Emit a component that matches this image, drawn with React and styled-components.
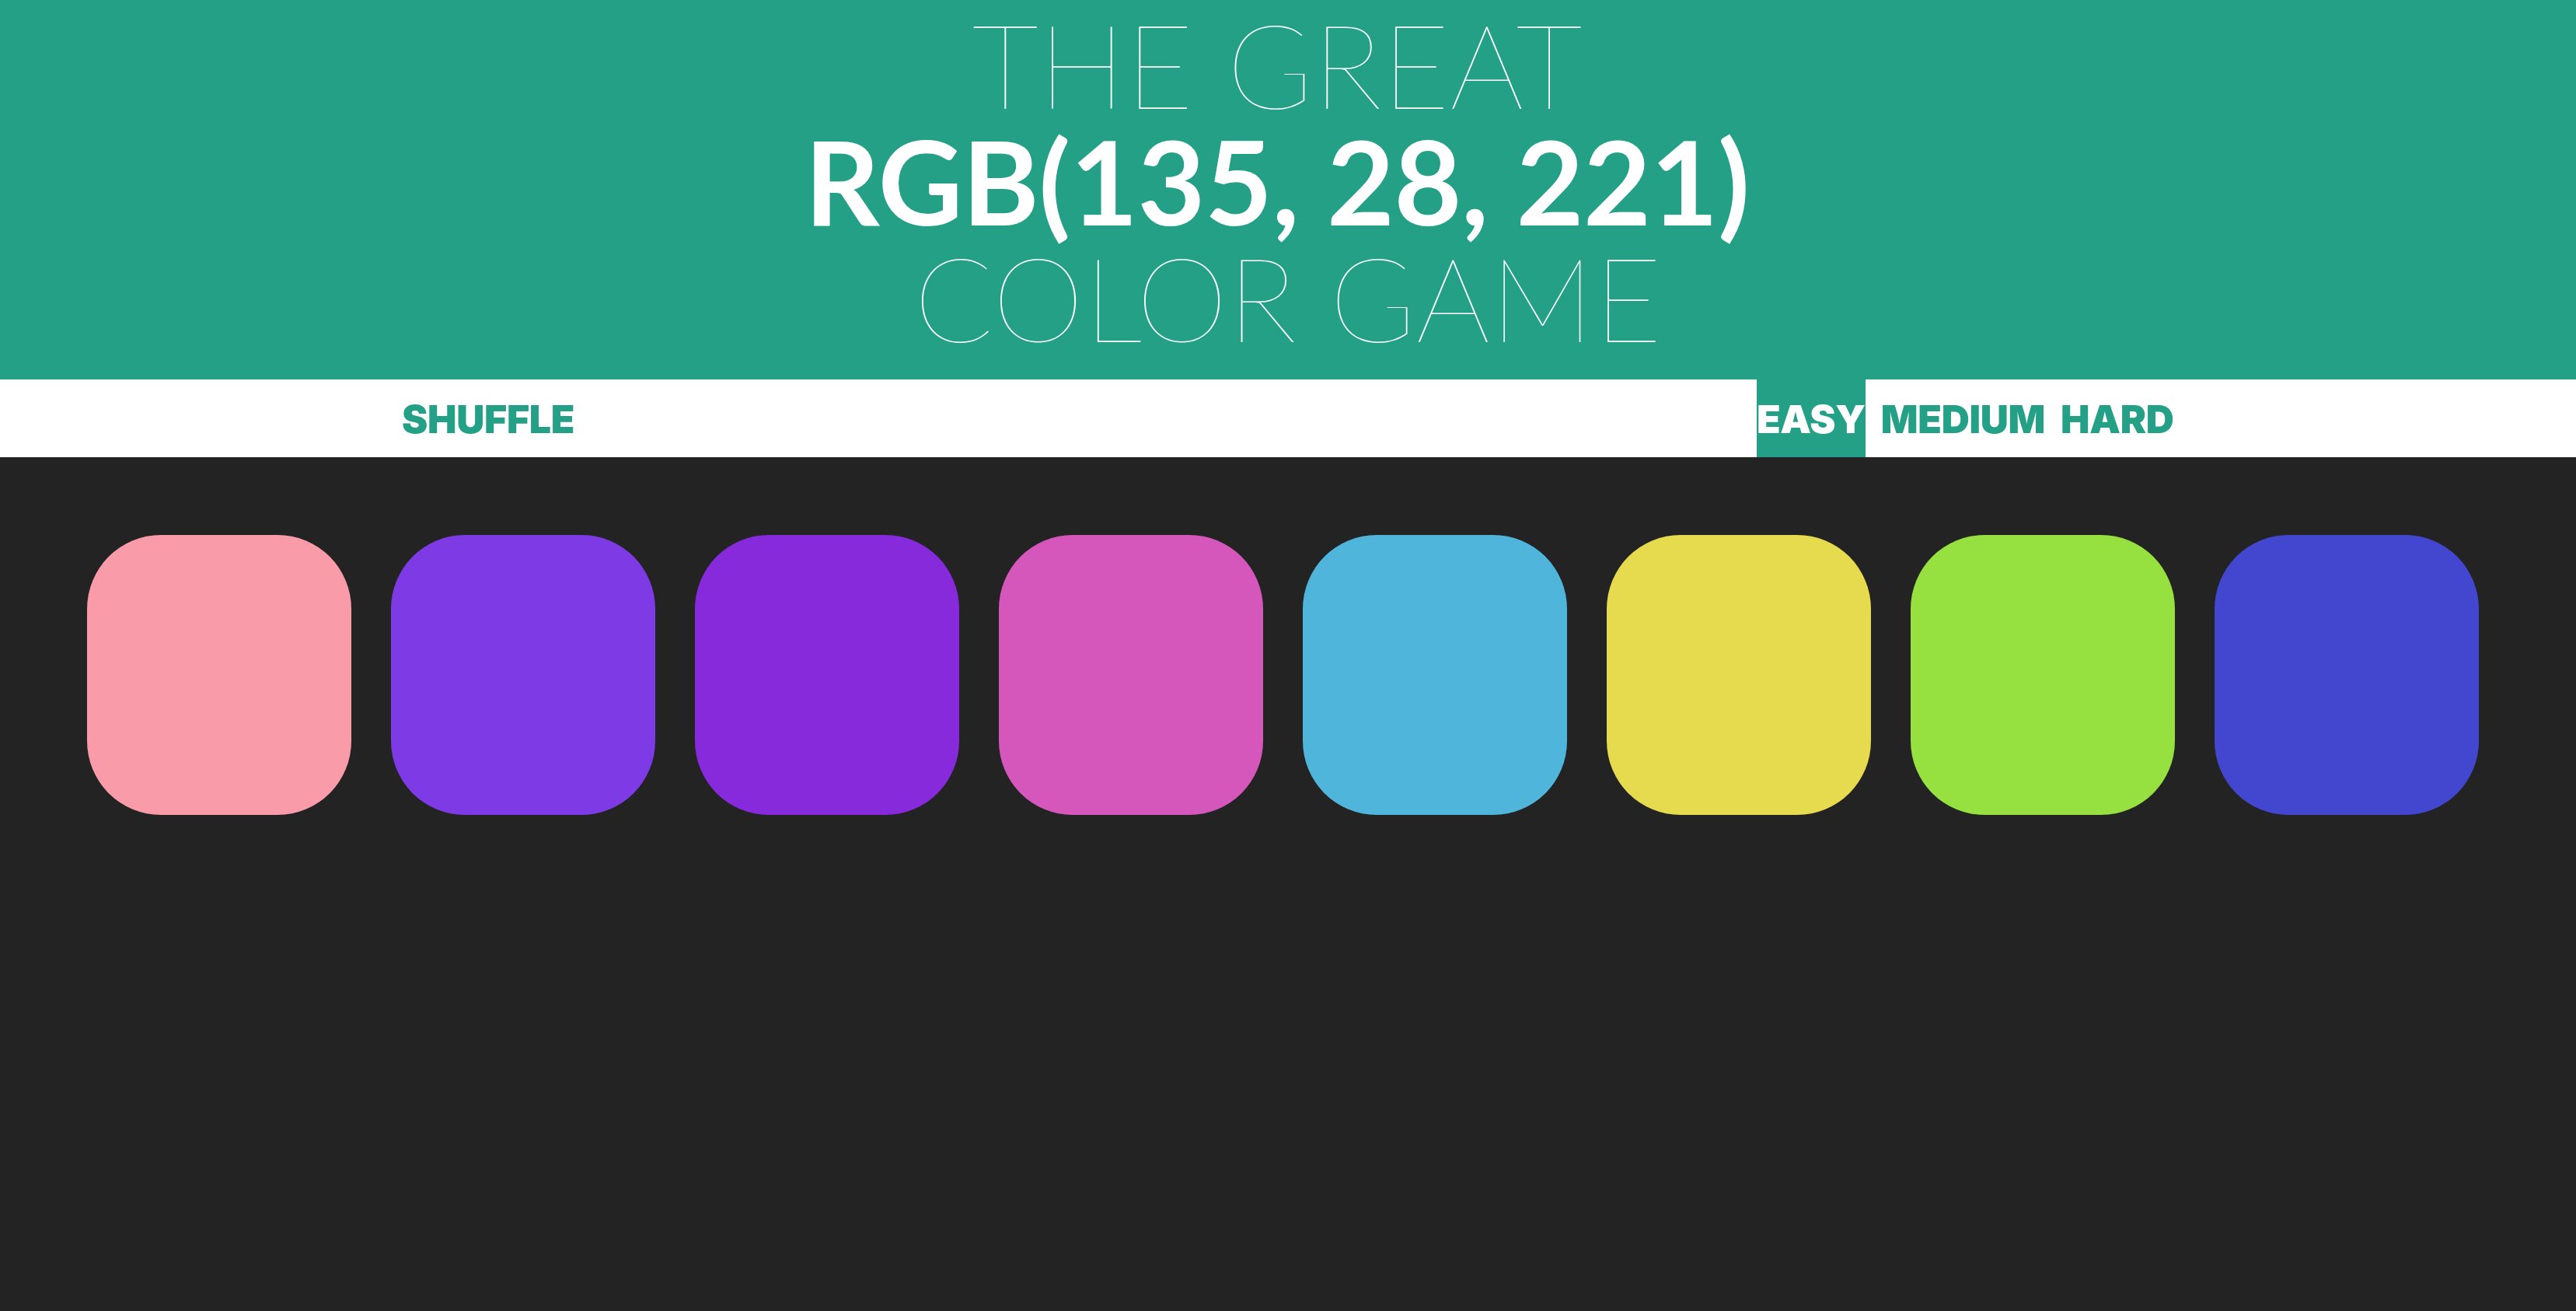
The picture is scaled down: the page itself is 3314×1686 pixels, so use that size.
import styled, { createGlobalStyle } from 'styled-components';

const GlobalStyle = createGlobalStyle`
  body {
    margin: 0;
    background: #232323;
    font-family: Lato, "Open Sans", sans-serif;
  }
`;

const colors = [
  'rgb(250, 155, 170)',
  'rgb(126, 59, 229)',
  'rgb(135, 42, 220)',
  'rgb(213, 87, 188)',
  'rgb(80, 181, 219)',
  'rgb(230, 219, 78)',
  'rgb(150, 224, 64)',
  'rgb(67, 71, 208)',
];

const App = () => (
  <Page>
    <GlobalStyle />
    <Header>
      <Line $trail>The Great</Line>
      <ColorDisplay>RGB(135, 28, 221)</ColorDisplay>
      <Line>Color Game</Line>
    </Header>
    <Stripe>
      <ShuffleButton>Shuffle</ShuffleButton>
      <Modes>
        <ModeButton $selected>Easy</ModeButton>
        <ModeButton>Medium</ModeButton>
        <ModeButton>Hard</ModeButton>
      </Modes>
    </Stripe>
    <Board>
      {colors.map(color => (
        <Square key={color} style={{ background: color }} />
      ))}
    </Board>
  </Page>
);

export default App;

const Page = styled.div`
  min-height: 100vh;
  background: #232323;
`;
const Header = styled.h1`
  margin: 0;
  padding: 7px 0 31px;
  background: rgb(35, 160, 134);
  color: #fff;
  text-align: center;
  text-transform: uppercase;
  font-family: Lato, sans-serif;
  font-size: 150px;
  line-height: 150px;
`;
const Line = styled.span`
  display: block;
  font-weight: 100;
  padding-right: ${p => (p.$trail ? '28px' : '0')};
`;
const ColorDisplay = styled.span`
  display: block;
  font-weight: 700;
  letter-spacing: -0.5px;
  padding-right: 28px;
`;
const Stripe = styled.div`
  display: flex;
  align-items: stretch;
  height: 100px;
  padding-left: 517px;
  background: #fff;
`;
const ButtonBase = styled.button`
  border: none;
  padding: 0;
  background: none;
  color: rgb(35, 160, 134);
  text-transform: uppercase;
  font-family: Inter, "Liberation Sans", sans-serif;
  font-weight: 900;
  font-size: 50px;
  line-height: 102px;
  letter-spacing: -0.3px;
  cursor: pointer;
`;
const ShuffleButton = styled(ButtonBase)`
  width: 1743px;
  text-align: left;
`;
const Modes = styled.div`
  display: flex;
  gap: 20px;
`;
const ModeButton = styled(ButtonBase)`
  background: ${p => (p.$selected ? 'rgb(35, 160, 134)' : 'none')};
  color: ${p => (p.$selected ? '#fff' : 'rgb(35, 160, 134)')};
`;
const Board = styled.div`
  display: flex;
  gap: 51px;
  padding: 100px 0 0 112px;
`;
const Square = styled.div`
  flex: none;
  width: 340px;
  height: 360px;
  border-radius: 95px;
`;
